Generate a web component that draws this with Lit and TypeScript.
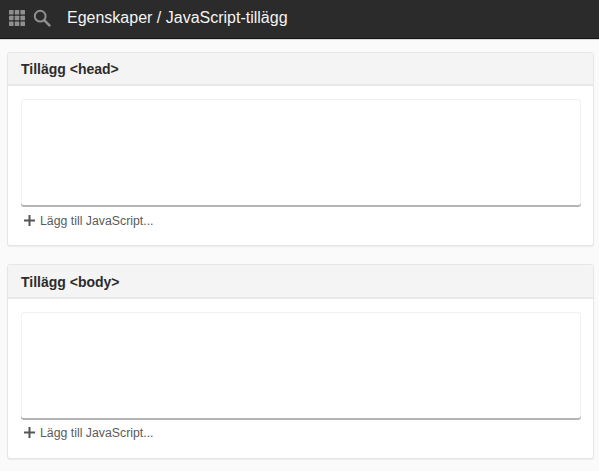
import { LitElement, html, css } from "lit";
import { customElement } from "lit/decorators.js";

@customElement("app-root")
export class AppRoot extends LitElement {
  static styles = css`
    :host {
      display: block;
      width: 599px;
      height: 471px;
      overflow: hidden;
      background: #fafafa;
      font-family: "Liberation Sans", Arial, sans-serif;
      color: #333;
    }
    .top {
      height: 39px;
      box-sizing: border-box;
      background: #2b2b2b;
      border-bottom: 1px solid #151515;
      box-shadow: 0 1px 0 #d8d8d8;
      display: flex;
      align-items: center;
      padding: 0 0 3px 9px;
    }
    .grid { width: 16px; height: 16px; display: block; }
    .search { width: 18px; height: 18px; display: block; margin-left: 8px; }
    .title {
      margin-left: 16px;
      color: #f4f4f4;
      font-size: 16px;
      white-space: nowrap;
    }
    .content {
      padding: 13px 5px 0 7px;
      display: flex;
      flex-direction: column;
      gap: 18px;
    }
    .panel {
      background: #fff;
      border: 1px solid #e6e6e6;
      border-radius: 3px;
      box-shadow: 0 1px 1px rgba(0, 0, 0, 0.06);
    }
    .panel-head {
      height: 33px;
      box-sizing: border-box;
      background: #f4f4f4;
      border-bottom: 2px solid #e8e8e8;
      padding: 0 13px;
      display: flex;
      align-items: center;
      font-size: 14px;
      font-weight: bold;
      color: #2c2c2c;
      border-radius: 3px 3px 0 0;
    }
    .panel.second .panel-head { height: 34px; padding-top: 2px; }
    .panel-body {
      padding: 13px 13px 0;
      height: 159px;
      box-sizing: border-box;
    }
    .box {
      height: 106px;
      box-sizing: border-box;
      border: 1px solid #f2f2f2;
      border-bottom: 0;
      border-radius: 3px;
      box-shadow: 0 2px 0 #b4b4b4;
      background: #fff;
      width: 560px;
    }
    .add {
      display: flex;
      align-items: center;
      margin: 9px 0 0 3px;
      font-size: 12.3px;
      color: #5a5a5a;
      white-space: nowrap;
    }
    .panel.second .add { margin-top: 8px; }
    .plus { width: 11px; height: 11px; display: block; margin: -1px 5px 0 0; }
  `;

  private addRow() {
    return html`<div class="add">
      <svg class="plus" viewBox="0 0 11 11"><path d="M5.5 0v11M0 5.5h11" stroke="#555" stroke-width="2" fill="none"/></svg>
      Lägg till JavaScript...
    </div>`;
  }

  render() {
    const squares = [];
    for (const y of [0, 5.5, 11]) {
      for (const x of [0, 5.5, 11]) {
        squares.push(html`<svg x=${x} y=${y} width="4.4" height="4.4" viewBox="0 0 4.4 4.4" overflow="visible"><rect width="4.4" height="4.4" rx="0.6" fill="#8f8f8f"/></svg>`);
      }
    }
    return html`
      <div class="top">
        <svg class="grid" viewBox="0 0 15.4 15.4">${squares}</svg>
        <svg class="search" viewBox="0 0 18 18" fill="none" stroke="#8f8f8f">
          <circle cx="7.2" cy="7.2" r="5.4" stroke-width="2"/>
          <path d="M11.2 11.2L16.4 16.4" stroke-width="2.6" stroke-linecap="round"/>
        </svg>
        <div class="title">Egenskaper / JavaScript-tillägg</div>
      </div>
      <div class="content">
        <section class="panel">
          <div class="panel-head">Tillägg &lt;head&gt;</div>
          <div class="panel-body"><div class="box"></div>${this.addRow()}</div>
        </section>
        <section class="panel second">
          <div class="panel-head">Tillägg &lt;body&gt;</div>
          <div class="panel-body"><div class="box"></div>${this.addRow()}</div>
        </section>
      </div>
    `;
  }
}
